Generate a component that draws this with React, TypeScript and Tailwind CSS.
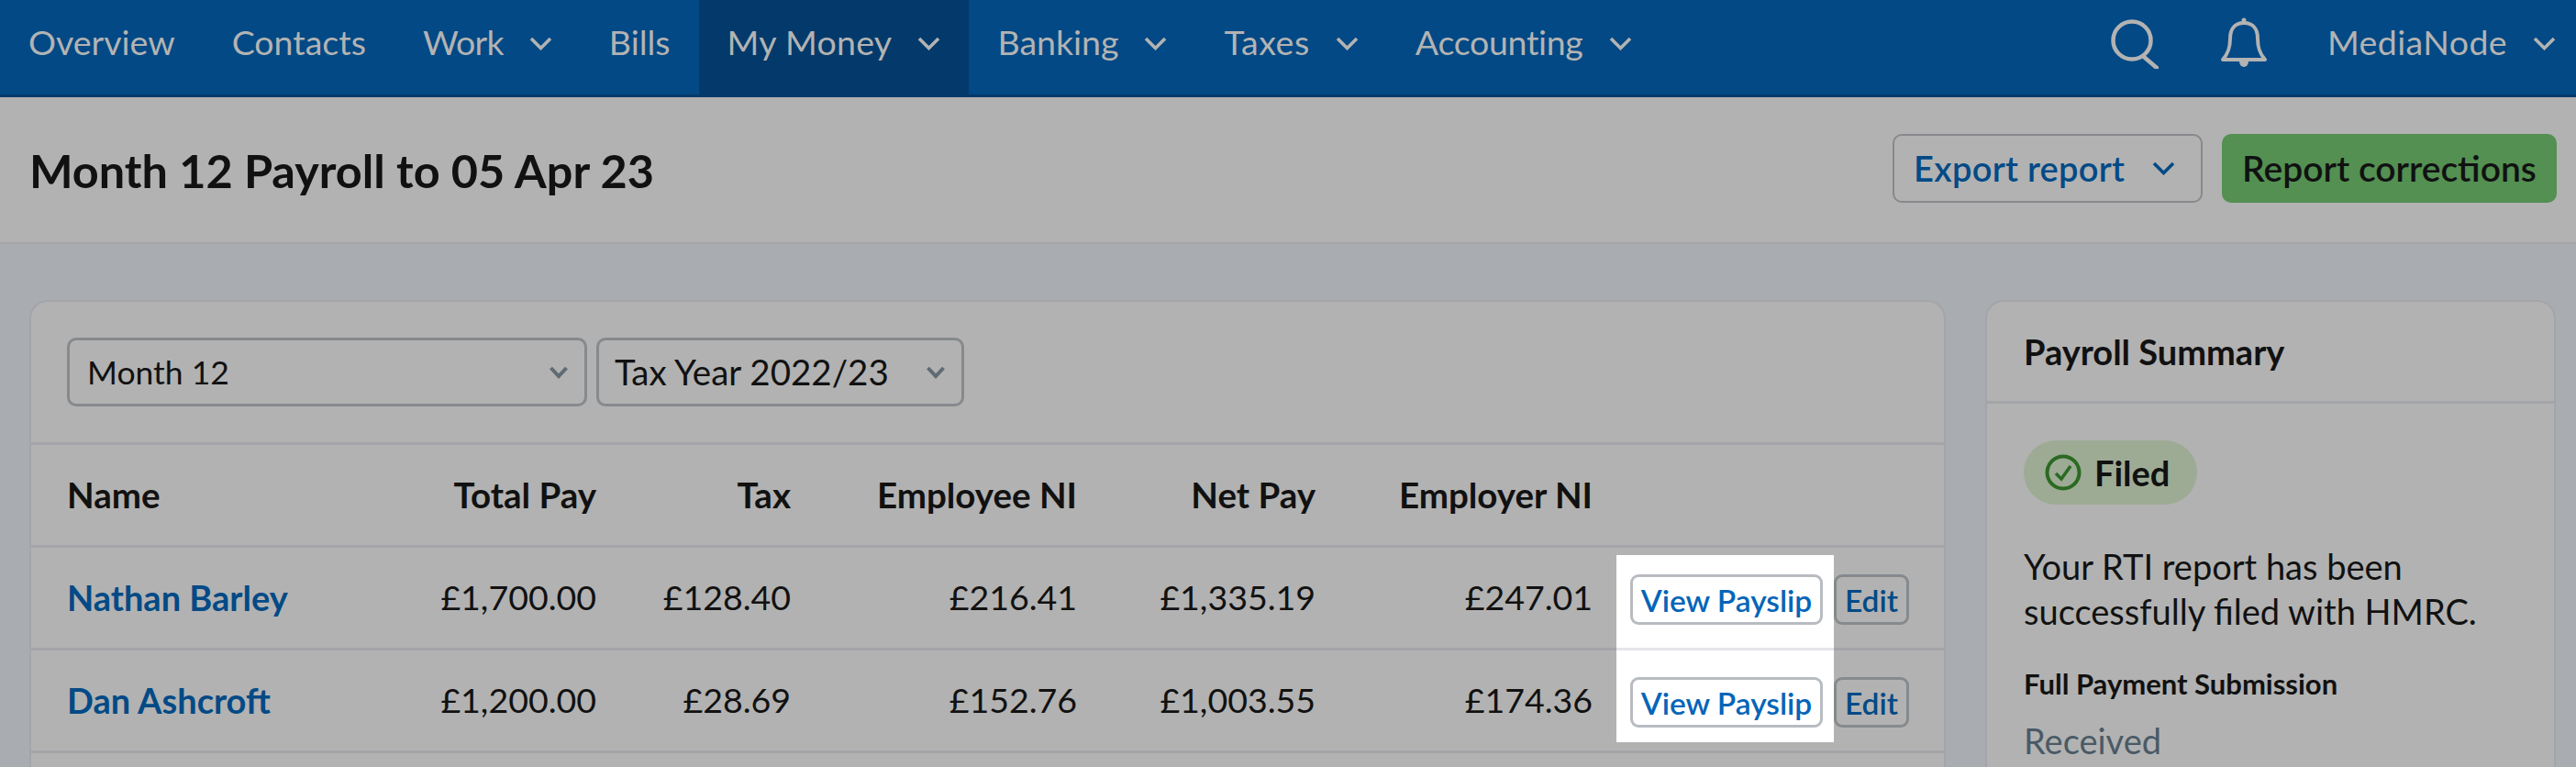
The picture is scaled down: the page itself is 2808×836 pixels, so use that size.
import React from "react";

const Chevron = ({ className }: { className: string }) => (
  <svg viewBox="0 0 25 15" fill="none" className={className}>
    <polyline points="2,2 12.5,12.5 23,2" stroke="currentColor" strokeWidth="3.6" />
  </svg>
);

const SmallChevron = () => (
  <svg viewBox="0 0 22 14" fill="none" className="w-[22px] h-[14px] text-[#5f6b73]">
    <polyline points="2.5,2 11,11 19.5,2" stroke="currentColor" strokeWidth="4" />
  </svg>
);

const NavItem = ({ label, chevron, active, track }: { label: string; chevron?: boolean; active?: boolean; track?: string }) => (
  <div className={`flex items-start pt-[24px] px-[31px] h-full ${active ? "bg-[#033a6b]" : ""}`}>
    <span className={`leading-[44px] ${track ?? ""}`}>{label}</span>
    {chevron && <Chevron className="w-[25px] h-[15px] ml-[28px] mt-[16px]" />}
  </div>
);

const rows = [
  { name: "Nathan Barley", total: "£1,700.00", tax: "£128.40", eni: "£216.41", net: "£1,335.19", ern: "£247.01" },
  { name: "Dan Ashcroft", total: "£1,200.00", tax: "£28.69", eni: "£152.76", net: "£1,003.55", ern: "£174.36" },
];

const gridCols = "grid grid-cols-[400px_177px_212px_312px_260px_302px_1fr]";

export default function App() {
  return (
    <div className="h-[836px] w-[2808px] overflow-hidden bg-[#a9acb1] text-[#111111] font-['Lato','Liberation_Sans',sans-serif]">
      <nav className="h-[106px] bg-[#024985] border-b-[3px] border-[#033a6b] flex justify-between text-[37.5px] text-[#b3b3b3]">
        <div className="flex h-full">
          <NavItem label="Overview" />
          <NavItem label="Contacts" />
          <NavItem label="Work" chevron track="tracking-[-0.7px]" />
          <NavItem label="Bills" />
          <NavItem label="My Money" chevron active track="tracking-[0.3px]" />
          <NavItem label="Banking" chevron />
          <NavItem label="Taxes" chevron track="tracking-[0.6px]" />
          <NavItem label="Accounting" chevron track="tracking-[-0.3px]" />
        </div>
        <div className="flex items-start pr-[22px] pt-[18px]">
          <svg viewBox="0 0 52 54" fill="none" className="w-[52px] h-[54px] mt-[3px]" stroke="currentColor" strokeWidth="4.5">
            <circle cx="23" cy="23" r="20.5" />
            <line x1="36" y1="41" x2="50" y2="53" strokeLinecap="round" />
          </svg>
          <svg viewBox="0 0 52 56" fill="none" className="w-[52px] h-[56px] ml-[67px]" stroke="currentColor" strokeWidth="4">
            <path d="M26 7C15 7 11 15 11 24C11 34 9 40 3 47H49C43 40 41 34 41 24C41 15 37 7 26 7Z" strokeLinejoin="round" />
            <circle cx="26" cy="4" r="2.5" fill="currentColor" stroke="none" />
            <path d="M21 49a5 6 0 0 0 10 0Z" fill="currentColor" stroke="none" />
          </svg>
          <span className="ml-[65px] mt-[6px] leading-[44px] tracking-[0.4px]">MediaNode</span>
          <Chevron className="w-[25px] h-[15px] ml-[28px] mt-[22px]" />
        </div>
      </nav>

      <header className="h-[160px] bg-[#b2b2b2] border-b-[2px] border-[#a3a5a8] flex items-start justify-between pl-[32px] pr-[21px] pt-[40px]">
        <h1 className="text-[50.4px] font-bold leading-[80px]">Month 12 Payroll to 05 Apr 23</h1>
        <div className="flex gap-[21px]">
          <button className="h-[75px] w-[338px] rounded-[10px] border-2 border-[#87898c] flex items-center pl-[21px] text-[38px] font-semibold tracking-[0.3px] text-[#034a86]">
            <span>Export report</span>
            <Chevron className="w-[25px] h-[15px] ml-[30px]" />
          </button>
          <button className="h-[75px] w-[365px] rounded-[10px] bg-[#539052] flex items-center justify-center text-[39px] font-semibold text-[#111111]">
            Report corrections
          </button>
        </div>
      </header>

      <main className="flex gap-[43px] pl-[32px] pr-[22px] pt-[61px]">
        <section className="w-[2089px] h-[600px] bg-[#b2b2b2] rounded-t-[20px] border-2 border-b-0 border-[#a3a5a8] text-[37.5px]">
          <div className="h-[156px] flex items-start gap-[10px] pl-[39px] pt-[39px] border-b-[3px] border-[#a3a5a8]">
            <div className="w-[567px] h-[75px] rounded-[10px] border-[3px] border-[#868a8d] flex items-center justify-between pl-[19px] pr-[17px]">
              <span className="text-[35.5px]">Month 12</span>
              <SmallChevron />
            </div>
            <div className="w-[401px] h-[75px] rounded-[10px] border-[3px] border-[#868a8d] flex items-center justify-between pl-[17px] pr-[17px]">
              <span className="text-[38.5px]">Tax Year 2022/23</span>
              <SmallChevron />
            </div>
          </div>

          <div className={`${gridCols} h-[112px] items-center pl-[39px] font-bold text-[38.5px] text-right border-b-[3px] border-[#a3a5a8]`}>
            <span className="text-left">Name</span>
            <span>Total Pay</span>
            <span>Tax</span>
            <span>Employee NI</span>
            <span>Net Pay</span>
            <span>Employer NI</span>
          </div>

          {rows.map((r, i) => (
            <div key={r.name} className={`${gridCols} h-[112px] pl-[39px] text-right border-b-[3px] border-[#a3a5a8]`}>
              <span className="text-left text-[38px] font-bold text-[#034a86] self-center">{r.name}</span>
              <span className="self-center">{r.total}</span>
              <span className="self-center">{r.tax}</span>
              <span className="self-center">{r.eni}</span>
              <span className="self-center">{r.net}</span>
              <span className="self-center">{r.ern}</span>
              <div className="flex items-stretch text-[33.5px] ml-[26px]">
                <div
                  className={
                    i === 0
                      ? "w-[237px] mt-[8px] -mb-[3px] bg-white border-b-[3px] border-[#e4e6e9] flex items-start pl-[15px] pt-[21px]"
                      : "w-[237px] mb-[9px] bg-white flex items-start pl-[15px] pt-[29px]"
                  }
                >
                  <button className="w-[210px] h-[55px] rounded-[9px] border-[3px] border-[#b8bcc1] text-[#0565b8] font-semibold">View Payslip</button>
                </div>
                <div className="pt-[29px]">
                  <button className="w-[82px] h-[55px] rounded-[9px] border-[3px] border-[#868a8d] text-[#034a86] font-semibold">Edit</button>
                </div>
              </div>
            </div>
          ))}
        </section>

        <aside className="w-[622px] h-[600px] bg-[#b2b2b2] rounded-t-[20px] border-2 border-b-0 border-[#a3a5a8]">
          <div className="h-[111px] flex items-center pl-[40px] border-b-[3px] border-[#a3a5a8] text-[38px] font-bold">Payroll Summary</div>
          <div className="pl-[40px] pt-[40px]">
            <div className="w-[189px] h-[70px] rounded-full bg-[#9dab95] flex items-center pl-[23px]">
              <svg viewBox="0 0 40 40" fill="none" className="w-[40px] h-[40px]">
                <circle cx="20" cy="20" r="17.5" stroke="#2a6a21" strokeWidth="4" />
                <polyline points="12,21 18,27 28,13" stroke="#2a6a21" strokeWidth="3.5" />
              </svg>
              <span className="ml-[14px] text-[38px] font-bold">Filed</span>
            </div>
            <p className="mt-[43px] text-[38px] leading-[49px]">
              Your RTI report has been
              <br />
              successfully filed with HMRC.
            </p>
            <h3 className="mt-[34px] text-[31px] font-bold leading-[40px]">Full Payment Submission</h3>
            <p className="mt-[20px] text-[38px] leading-[44px] text-[#4a5a66]">Received</p>
          </div>
        </aside>
      </main>
    </div>
  );
}
